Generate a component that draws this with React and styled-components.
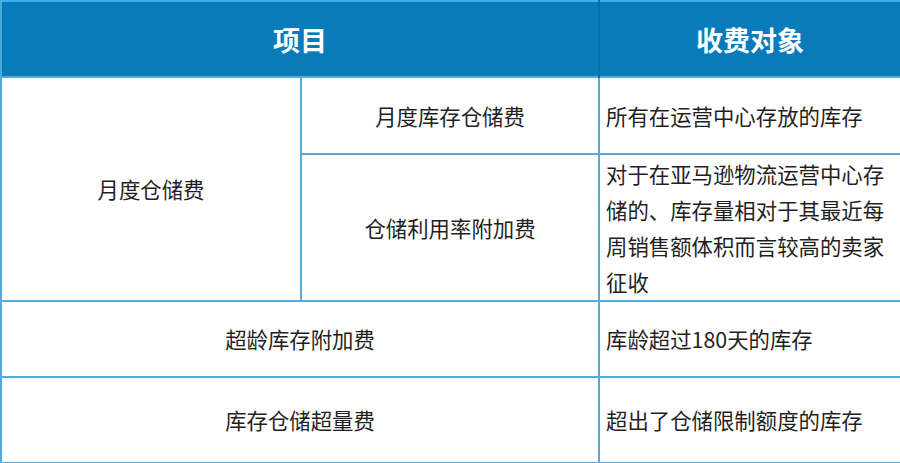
import React from "react";
import styled, { createGlobalStyle } from "styled-components";

const GlobalStyle = createGlobalStyle`
  html, body {
    margin: 0;
    padding: 0;
    background: #ffffff;
  }
  body {
    font-family: "Noto Sans CJK SC", "Noto Sans", sans-serif;
  }
`;

const Table = styled.table`
  width: 900px;
  height: 463px;
  border-collapse: collapse;
  table-layout: fixed;
  border: 2px solid #49a9d9;
`;

const HeadCell = styled.th`
  height: 74px;
  padding: 0;
  background: #0a7bba;
  border-top: 2px solid #3fb0e6;
  border-right: 2px solid ${(p) => (p.$last ? "#49a9d9" : "#0f6ea5")};
  color: #ffffff;
  font-size: 27px;
  font-weight: 700;
  text-align: center;
  vertical-align: middle;
`;

const Cell = styled.td`
  padding: 0 ${(p) => (p.$left ? "6px" : "0")};
  border: 2px solid #55acd8;
  color: #1f1f1f;
  font-size: 21.4px;
  line-height: 36px;
  text-align: ${(p) => (p.$left ? "left" : "center")};
  vertical-align: middle;
`;

const Row = styled.tr`
  height: ${(p) => p.$h}px;
`;

export default function App() {
  return (
    <>
      <GlobalStyle />
      <Table>
        <colgroup>
          <col style={{ width: 300 }} />
          <col style={{ width: 298 }} />
          <col style={{ width: 302 }} />
        </colgroup>
        <thead>
          <tr>
            <HeadCell colSpan={2}>项目</HeadCell>
            <HeadCell $last>收费对象</HeadCell>
          </tr>
        </thead>
        <tbody>
          <Row $h={77}>
            <Cell rowSpan={2}>月度仓储费</Cell>
            <Cell>月度库存仓储费</Cell>
            <Cell $left>所有在运营中心存放的库存</Cell>
          </Row>
          <Row $h={147}>
            <Cell>仓储利用率附加费</Cell>
            <Cell $left>
              对于在亚马逊物流运营中心存储的、库存量相对于其最近每周销售额体积而言较高的卖家征收
            </Cell>
          </Row>
          <Row $h={76}>
            <Cell colSpan={2}>超龄库存附加费</Cell>
            <Cell $left>库龄超过180天的库存</Cell>
          </Row>
          <Row $h={86}>
            <Cell colSpan={2}>库存仓储超量费</Cell>
            <Cell $left>超出了仓储限制额度的库存</Cell>
          </Row>
        </tbody>
      </Table>
    </>
  );
}
